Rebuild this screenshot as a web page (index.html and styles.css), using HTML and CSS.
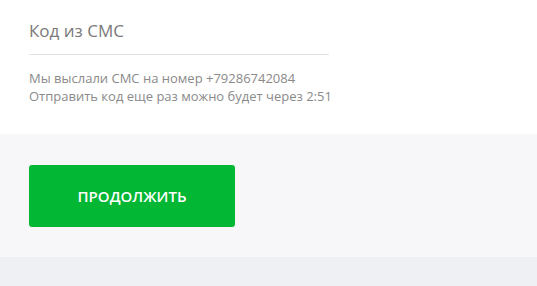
FILE: index.html
```html
<!DOCTYPE html>
<html lang="ru">
<head>
<meta charset="utf-8">
<link rel="stylesheet" href="styles.css">
</head>
<body>
<div class="page">
  <section class="form">
    <div class="field">Код из СМС</div>
    <p class="hint">Мы выслали СМС на номер +79286742084<br>Отправить код еще раз можно будет через 2:51</p>
  </section>
  <section class="footer">
    <button class="btn">ПРОДОЛЖИТЬ</button>
  </section>
</div>
</body>
</html>
```

FILE: styles.css
```css
html, body {
  margin: 0;
  padding: 0;
  background: #eff0f4;
  font-family: "Open Sans", "Noto Sans", sans-serif;
}
.page {
  width: 537px;
}
.form {
  background: #ffffff;
  height: 134px;
  box-sizing: border-box;
  padding: 20px 29px 0;
}
.field {
  width: 300px;
  font-size: 17px;
  line-height: 22px;
  color: #7a7a7a;
  padding-bottom: 12px;
  border-bottom: 1px solid #e3e3e3;
}
.hint {
  margin: 14px 0 0;
  font-size: 13px;
  line-height: 18px;
  color: #8a8a8a;
}
.footer {
  background: #f7f7f9;
  padding: 31px 29px 30px;
  box-shadow: 0 2px 4px rgba(0, 0, 0, 0.05);
  position: relative;
}
.btn {
  display: block;
  width: 206px;
  height: 62px;
  border: none;
  border-radius: 3px;
  background: #01b733;
  color: #ffffff;
  font-family: "Open Sans", "Noto Sans", sans-serif;
  font-weight: 600;
  font-size: 15px;
  padding: 0;
}
```
